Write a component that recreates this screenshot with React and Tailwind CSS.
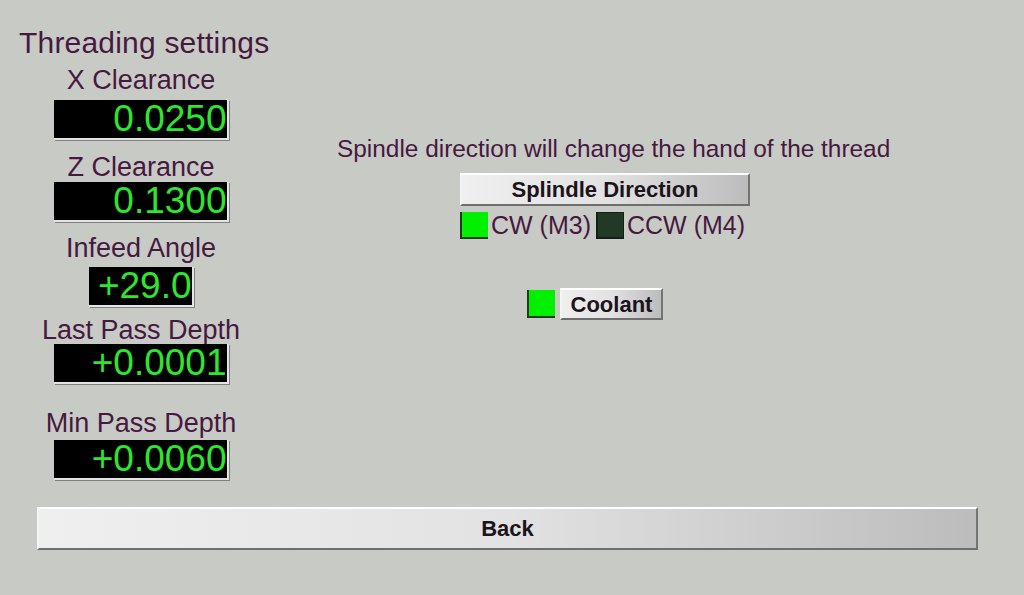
const fields = [
    { label: 'X Clearance', value: '0.0250', labelMt: 'mt-[6px]', boxMt: 'mt-[6px]', wide: true },
    { label: 'Z Clearance', value: '0.1300', labelMt: 'mt-[13px]', boxMt: 'mt-[1px]', wide: true },
    { label: 'Infeed Angle', value: '+29.0', labelMt: 'mt-[12px]', boxMt: 'mt-[5px]', wide: false },
    { label: 'Last Pass Depth', value: '+0.0001', labelMt: 'mt-[9px]', boxMt: 'mt-0', wide: true },
    { label: 'Min Pass Depth', value: '+0.0060', labelMt: 'mt-[25px]', boxMt: 'mt-[3px]', wide: true },
];

/**
 * Etiqueta con su casilla numérica (DRO) en verde sobre negro.
 */
function Field({ label, value, labelMt, boxMt, wide }) {
    return (
        <>
            <div className={`${labelMt} text-[27px] leading-[28px] text-[#46193f] whitespace-nowrap`}>
                {label}
            </div>
            <div
                className={`${boxMt} ${wide ? 'w-[175px]' : 'w-[105px]'} h-[40px] bg-black border-r-2 border-b-2 border-[#e4e4e4] shadow-[1px_1px_0_#808080] text-right`}
            >
                <span className="block text-[37px] leading-[38px] text-[#2ee62e]">{value}</span>
            </div>
        </>
    );
}

function Button({ children, className = '' }) {
    return (
        <button
            type="button"
            className={`flex items-center justify-center border-t-2 border-l-2 border-t-white border-l-[#f4f4f4] border-b-2 border-r-2 border-b-[#6e6e6e] border-r-[#747474] bg-linear-to-r from-[#efefef] via-[#e2e2e2] to-[#bcbcbc] text-[22px] font-bold text-[#1b141b] ${className}`}
        >
            {children}
        </button>
    );
}

export default function App() {
    return (
        <div className="h-[595px] w-full overflow-hidden bg-[#c8cac6] font-['Liberation_Sans',Arial,sans-serif]">
            <div className="flex">
                <div className="flex w-[282px] flex-col items-center pt-[26px]">
                    <h1 className="self-start pl-[19px] text-[30px] leading-[34px] tracking-[0.2px] text-[#46193f] whitespace-nowrap">
                        Threading settings
                    </h1>
                    {fields.map((field) => (
                        <Field key={field.label} {...field} />
                    ))}
                </div>

                <div className="flex flex-1 flex-col items-start pt-[135px]">
                    <p className="ml-[55px] text-[24.4px] leading-[28px] text-[#46193f] whitespace-nowrap">
                        Spindle direction will change the hand of the thread
                    </p>
                    <Button className="ml-[178px] mt-[10px] h-[33px] w-[290px]">Splindle Direction</Button>
                    <div className="ml-[178px] mt-[5px] flex items-center text-[25px] leading-[28px] text-[#46193f] whitespace-nowrap">
                        <span className="h-[27px] w-[28px] bg-[#00f000] border-l-2 border-b-2 border-[#1d3a1d]" />
                        <span className="ml-[3px]">CW (M3)</span>
                        <span className="ml-[5px] h-[27px] w-[28px] bg-[#213a25] border-l-2 border-b-2 border-t border-r border-[#141f16]" />
                        <span className="ml-[3px]">CCW (M4)</span>
                    </div>
                    <div className="ml-[245px] mt-[49px] flex items-center">
                        <span className="h-[28px] w-[28px] bg-[#00f000] border-l-2 border-b-2 border-[#1d3a1d]" />
                        <Button className="ml-[5px] h-[32px] w-[103px]">Coolant</Button>
                    </div>
                </div>
            </div>

            <Button className="ml-[37px] mt-[27px] h-[43px] w-[941px]">Back</Button>
        </div>
    );
}
